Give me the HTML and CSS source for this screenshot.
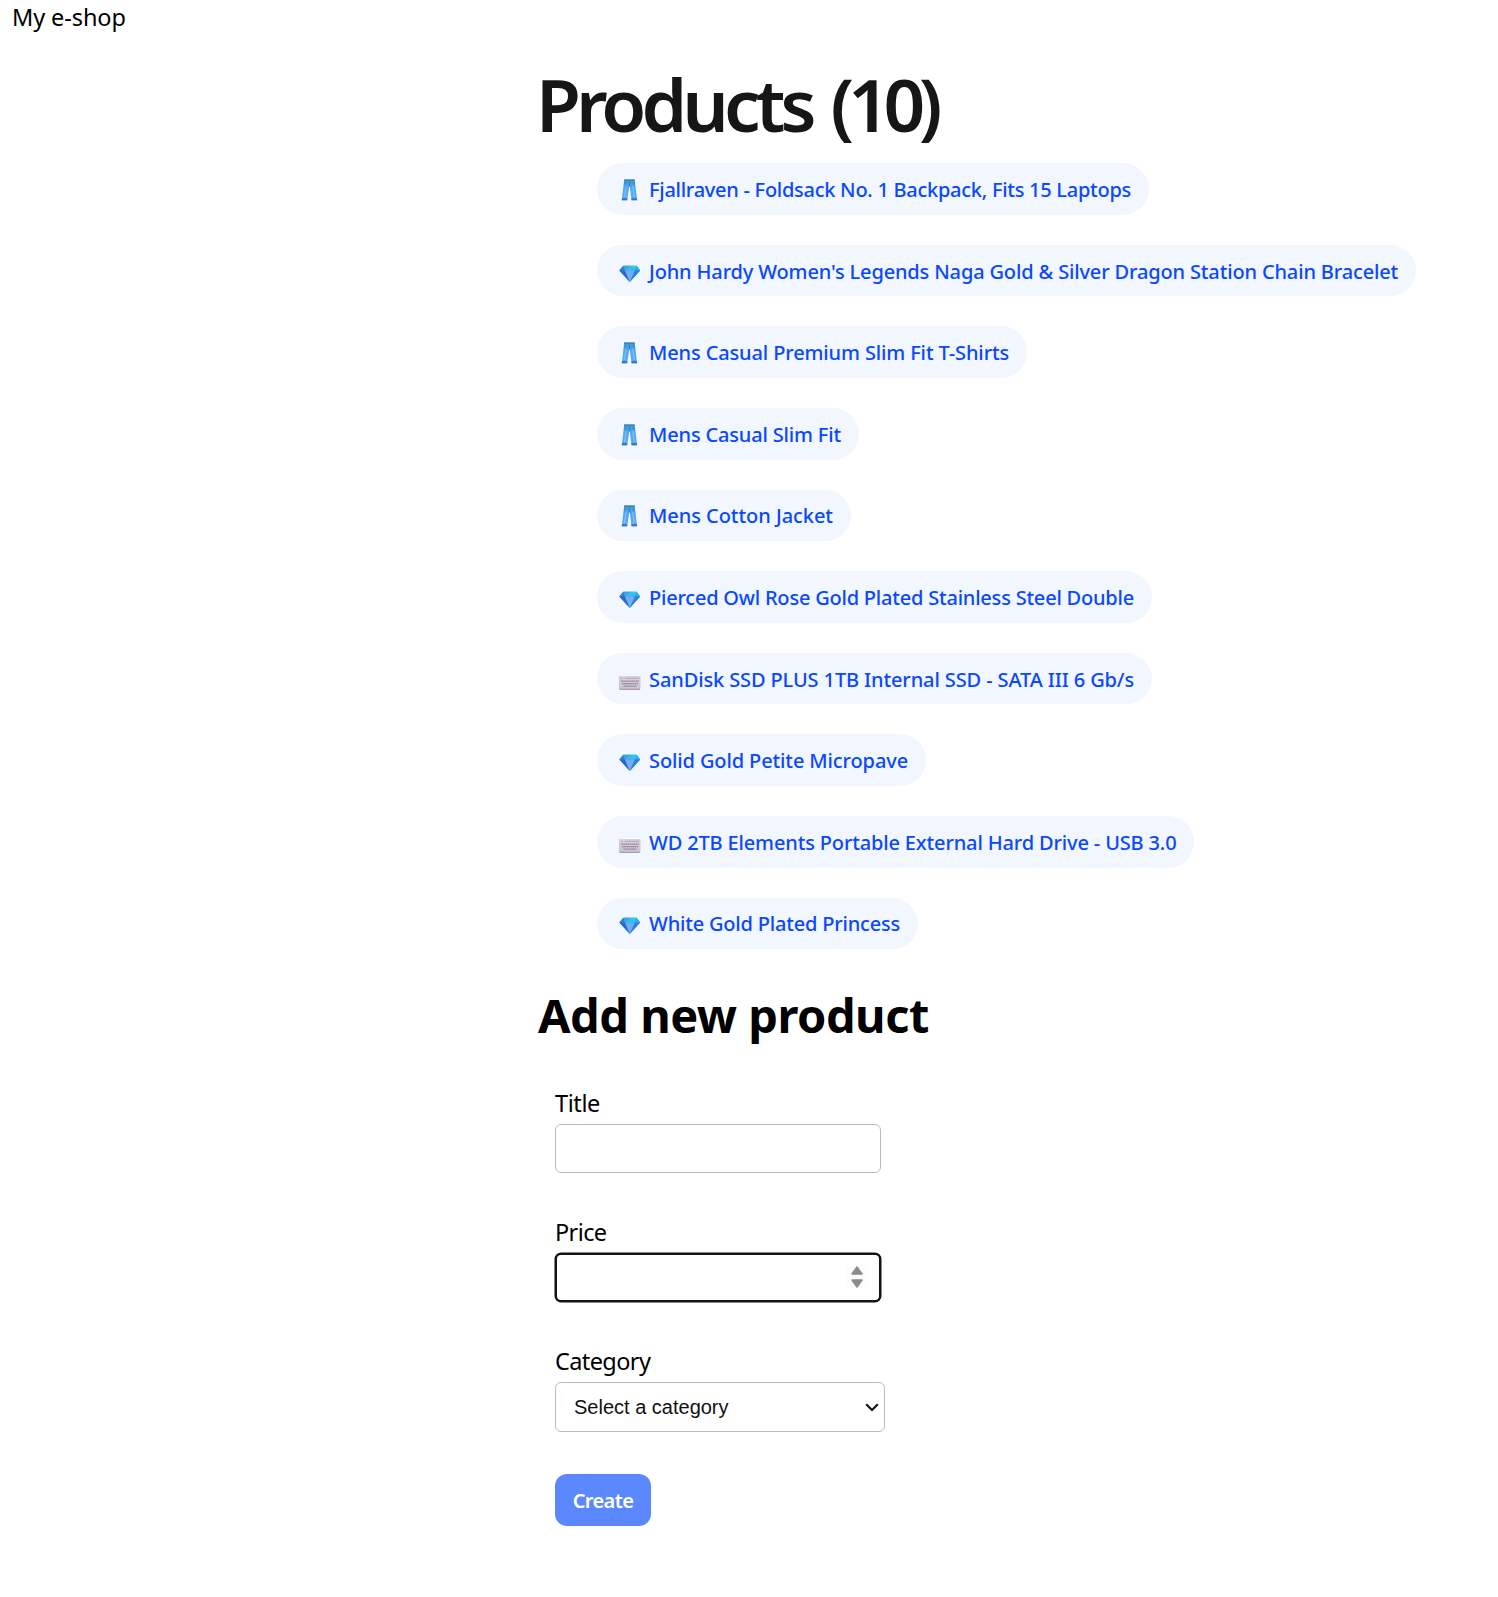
FILE: index.html
```html
<!DOCTYPE html>
<html lang="en">
<head>
<meta charset="utf-8">
<title>My e-shop</title>
<link rel="stylesheet" href="styles.css">
</head>
<body>
<svg class="defs" width="0" height="0" aria-hidden="true">
  <defs>
    <linearGradient id="denim" x1="0" y1="0" x2="0" y2="1"><stop offset="0" stop-color="#3e96cf"/><stop offset=".4" stop-color="#4ea6f2"/><stop offset="1" stop-color="#5caaf5"/></linearGradient>
    <linearGradient id="keys" x1="0" y1="0" x2="0" y2="1"><stop offset="0" stop-color="#d9d3de"/><stop offset="1" stop-color="#cbc2d4"/></linearGradient>
    <symbol id="jeans" viewBox="0 0 22 22">
      <path d="M5.2 .5h10.400l2.500 20.700h-5.600L10.800 7.500h-.6L8.200 21.200H2.800z" fill="url(#denim)"/>
      <path d="M5.200 .5h10.400l.2 1.600H5z" fill="#3b86ad"/>
      <path d="M3 19.200h5.400l-.3 2.100H2.700zM12.300 19.200h5.600l.3 2.100h-5.600z" fill="#3473bd"/>
      <path d="M5 5l2.200-1.500M16 5l-2.200-1.500M10.500 2.400v5" stroke="#2e78bd" stroke-width=".8" fill="none"/>
      <path d="M13.800 7l1.400 11M7 7L5.700 18" stroke="#7dbcfa" stroke-width="1.400"/>
    </symbol>
    <symbol id="diamond" viewBox="0 0 22 22">
      <path d="M4.300 4.800h13.200L21.200 9.500 10.800 20.900.3 9.500z" fill="#3b8fe0"/>
      <path d="M4.300 4.800L.3 9.500H6z" fill="#2d83c9"/>
      <path d="M4.300 4.800H11L6 9.500z" fill="#3fa4dc"/>
      <path d="M11 4.800L6 9.500h10z" fill="#35bdec"/>
      <path d="M11 4.800h6.500L16 9.500z" fill="#27cdfa"/>
      <path d="M17.500 4.800L21.200 9.500H16z" fill="#28aee8"/>
      <path d="M.3 9.500H6l4.800 11.400z" fill="#2b67c5"/>
      <path d="M6 9.500h10l-5.200 11.400z" fill="#71adf0"/>
      <path d="M16 9.500h5.200L10.800 20.900z" fill="#2f80de"/>
    </symbol>
    <symbol id="keyboard" viewBox="0 0 22 22">
      <rect x=".2" y="7" width="21" height="14" rx="1.200" fill="#a99bb4"/>
      <rect x=".2" y="7" width="21" height="12.700" rx="1.200" fill="url(#keys)"/>
      <path d="M2 9.300h2M6 9.300h14" stroke="#a49bab" stroke-width="1.100" stroke-dasharray="1.600 .5"/>
      <path d="M2 12.200h18M3 14.700h16M4.500 17.200h13" stroke="#8f8796" stroke-width="1.200" stroke-dasharray="1.700 .4"/>
    </symbol>
  </defs>
</svg>
<header class="site-header">My e-shop</header>
<main class="content">
  <h1 class="page-title">Products <span class="count">(10)</span></h1>
  <ul class="products">
    <li><a class="pill"><svg class="icon"><use href="#jeans"/></svg><span>Fjallraven - Foldsack No. 1 Backpack, Fits 15 Laptops</span></a></li>
    <li><a class="pill"><svg class="icon"><use href="#diamond"/></svg><span>John Hardy Women's Legends Naga Gold &amp; Silver Dragon Station Chain Bracelet</span></a></li>
    <li><a class="pill"><svg class="icon"><use href="#jeans"/></svg><span>Mens Casual Premium Slim Fit T-Shirts</span></a></li>
    <li><a class="pill"><svg class="icon"><use href="#jeans"/></svg><span>Mens Casual Slim Fit</span></a></li>
    <li><a class="pill"><svg class="icon"><use href="#jeans"/></svg><span>Mens Cotton Jacket</span></a></li>
    <li><a class="pill"><svg class="icon"><use href="#diamond"/></svg><span>Pierced Owl Rose Gold Plated Stainless Steel Double</span></a></li>
    <li><a class="pill"><svg class="icon"><use href="#keyboard"/></svg><span>SanDisk SSD PLUS 1TB Internal SSD - SATA III 6 Gb/s</span></a></li>
    <li><a class="pill"><svg class="icon"><use href="#diamond"/></svg><span>Solid Gold Petite Micropave</span></a></li>
    <li><a class="pill"><svg class="icon"><use href="#keyboard"/></svg><span>WD 2TB Elements Portable External Hard Drive - USB 3.0</span></a></li>
    <li><a class="pill"><svg class="icon"><use href="#diamond"/></svg><span>White Gold Plated Princess</span></a></li>
  </ul>
  <h2 class="section-title">Add new product</h2>
  <form class="form">
    <div class="field">
      <label class="label label-title" for="title">Title</label>
      <input class="control" id="title" type="text">
    </div>
    <div class="field">
      <label class="label label-price" for="price">Price</label>
      <div class="control control-focus">
        <input class="bare" id="price" type="text" inputmode="decimal">
        <svg class="spinner" viewBox="0 0 22 22"><rect width="22" height="22" fill="#fcfcfc"/><path d="M11 1L16 8H6zM11 21L6 14h10z" fill="#8b8b8b" stroke="#8b8b8b" stroke-width="1.500" stroke-linejoin="round"/></svg>
      </div>
    </div>
    <div class="field">
      <label class="label label-category" for="category">Category</label>
      <div class="select-wrap">
        <select class="control control-select" id="category"><option>Select a category</option></select>
        <svg class="chevron" viewBox="0 0 14 9"><path d="M1.200 1.300L7 7.100l5.800-5.800" fill="none" stroke="#111" stroke-width="2.100"/></svg>
      </div>
    </div>
    <button class="create" type="button">Create</button>
  </form>
</main>
</body>
</html>
```
FILE: styles.css
```css
* { box-sizing: border-box; }
body {
  margin: 0;
  background: #fff;
  color: #000;
  font-family: "Noto Sans", "Open Sans", sans-serif;
  font-size: 23.5px;
  line-height: 32px;
}
.defs { display: block; }
.site-header { height: 59px; padding: 1px 0 0 12px; letter-spacing: -0.1px; }
.content { margin-left: 538px; }
.page-title {
  margin: 0 0 14.2px -2px;
  font-size: 73px;
  font-weight: 600;
  line-height: 90px;
  letter-spacing: -4.9px;
  word-spacing: 5px;
  color: #161618;
}
.count { letter-spacing: -6.3px; }
.products {
  display: flex;
  flex-direction: column;
  align-items: flex-start;
  gap: 30px;
  margin: 0;
  padding: 0 0 0 59px;
  list-style: none;
}
.pill {
  display: flex;
  align-items: center;
  gap: 8px;
  height: 51.6px;
  padding: 2px 18px 0 22px;
  border-radius: 26px;
  background: #f2f6ff;
  color: #0a48ff;
  font-size: 20px;
  font-weight: 500;
  white-space: nowrap;
  letter-spacing: -0.15px;
}
.products li:nth-child(1) .pill { letter-spacing: -0.268px; }
.products li:nth-child(3) .pill { letter-spacing: -0.13px; }
.products li:nth-child(4) .pill { letter-spacing: -0.165px; }
.products li:nth-child(5) .pill { letter-spacing: -0.05px; }
.products li:nth-child(6) .pill { letter-spacing: -0.21px; }
.products li:nth-child(7) .pill,
.products li:nth-child(8) .pill { letter-spacing: -0.118px; }
.products li:nth-child(10) .pill { letter-spacing: -0.19px; }
.icon { width: 22px; height: 22px; }
.section-title {
  margin: 34.300px 0 39.500px;
  font-size: 47px;
  font-weight: 700;
  line-height: 64px;
  letter-spacing: -0.5px;
}
.form {
  display: flex;
  flex-direction: column;
  align-items: flex-start;
  padding-left: 17px;
}
.field { display: flex; flex-direction: column; gap: 5px; height: 86px; margin-bottom: 43px; }
.label-title { letter-spacing: -0.4px; }
.label-price { letter-spacing: -0.6px; }
.label-category { letter-spacing: -0.6px; }
.control {
  width: 326px;
  height: 49px;
  padding: 0 18px;
  border: 1px solid #bbb;
  border-radius: 6px;
  background: #fff;
  color: #111;
  font: 20px "Liberation Sans", Arial, sans-serif;
  outline: none;
}
.control-focus {
  display: flex;
  align-items: center;
  justify-content: space-between;
  padding: 0 11px 0 16px;
  border: 2px solid #101415;
  box-shadow: 0 0 0 0.5px #101415;
}
.bare { width: 200px; border: 0; outline: 0; background: none; }
.spinner { width: 22px; height: 22px; }
.select-wrap { display: grid; align-items: center; width: 330px; }
.control-select { grid-area: 1 / 1; width: 330px; height: 50px; appearance: none; }
.chevron { grid-area: 1 / 1; justify-self: end; width: 14px; height: 9px; margin: 1px 6px 0 0; pointer-events: none; }
.create {
  width: 96px;
  height: 52px;
  padding: 1px 0 0;
  border: 0;
  border-radius: 12px;
  background: #5c88ff;
  color: #fff;
  font: 600 20px "Noto Sans", sans-serif;
  letter-spacing: -0.6px;
}
```
